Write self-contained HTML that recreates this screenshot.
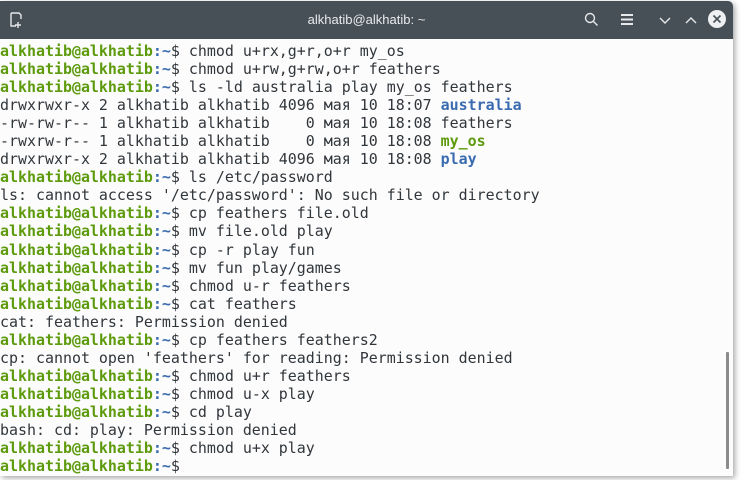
<!DOCTYPE html>
<html><head><meta charset="utf-8"><style>
html,body{margin:0;padding:0;width:745px;height:480px;overflow:hidden;background:#fff;}
.win{position:absolute;left:0;top:1px;width:733px;height:475px;background:#fcfcfc;border-top-right-radius:5px;box-shadow:2px 2px 6px rgba(0,0,0,.35);overflow:hidden}
.tb{position:absolute;left:0;top:0;width:733px;height:38px;background:#475057;}
.title{position:absolute;left:0;right:0;top:11px;text-align:center;color:#e8eaeb;font:13px "Liberation Sans",sans-serif}
.term{position:absolute;left:0;top:41px;font-family:"DejaVu Sans Mono","Liberation Mono",monospace;font-size:14.95px;line-height:18.05px;color:#31363b;white-space:pre}
.g{color:#5d9a0c;font-weight:bold}.b{color:#3a6bb0;font-weight:bold}
.sb{position:absolute;left:726px;top:351px;width:3px;height:117px;background:#8a8c8c;border-radius:1px}
</style></head><body>
<div class="win">
<div class="tb">
<svg width="733" height="38" style="position:absolute;left:0;top:0" fill="none" stroke="#e6e8ea" stroke-width="1.4">
<path d="M11 12h8l2 2v4M11 12v13h5M18 21v6M15 24h6"/>
<circle cx="590" cy="17" r="4.5"/><path d="M593.5 20.5l4 4"/>
<path d="M621 14h12M621 18.5h12M621 23h12" stroke-width="2"/>
<path d="M660 17l5 5 5-5M686 22l5-5 5 5"/>
<circle cx="717" cy="18" r="9" fill="#eef0f1" stroke="none"/>
<path d="M713.5 14.5l7 7M720.5 14.5l-7 7" stroke="#475057" stroke-width="1.6"/>
</svg>
<div class="title">alkhatib@alkhatib: ~</div>
</div>
<div class="term"><span class="g">alkhatib@alkhatib</span><span class="b">:~</span>$ chmod u+rx,g+r,o+r my_os
<span class="g">alkhatib@alkhatib</span><span class="b">:~</span>$ chmod u+rw,g+rw,o+r feathers
<span class="g">alkhatib@alkhatib</span><span class="b">:~</span>$ ls -ld australia play my_os feathers
drwxrwxr-x 2 alkhatib alkhatib 4096 мая 10 18:07 <span class="b">australia</span>
-rw-rw-r-- 1 alkhatib alkhatib    0 мая 10 18:08 feathers
-rwxrw-r-- 1 alkhatib alkhatib    0 мая 10 18:08 <span class="g">my_os</span>
drwxrwxr-x 2 alkhatib alkhatib 4096 мая 10 18:08 <span class="b">play</span>
<span class="g">alkhatib@alkhatib</span><span class="b">:~</span>$ ls /etc/password
ls: cannot access '/etc/password': No such file or directory
<span class="g">alkhatib@alkhatib</span><span class="b">:~</span>$ cp feathers file.old
<span class="g">alkhatib@alkhatib</span><span class="b">:~</span>$ mv file.old play
<span class="g">alkhatib@alkhatib</span><span class="b">:~</span>$ cp -r play fun
<span class="g">alkhatib@alkhatib</span><span class="b">:~</span>$ mv fun play/games
<span class="g">alkhatib@alkhatib</span><span class="b">:~</span>$ chmod u-r feathers
<span class="g">alkhatib@alkhatib</span><span class="b">:~</span>$ cat feathers
cat: feathers: Permission denied
<span class="g">alkhatib@alkhatib</span><span class="b">:~</span>$ cp feathers feathers2
cp: cannot open 'feathers' for reading: Permission denied
<span class="g">alkhatib@alkhatib</span><span class="b">:~</span>$ chmod u+r feathers
<span class="g">alkhatib@alkhatib</span><span class="b">:~</span>$ chmod u-x play
<span class="g">alkhatib@alkhatib</span><span class="b">:~</span>$ cd play
bash: cd: play: Permission denied
<span class="g">alkhatib@alkhatib</span><span class="b">:~</span>$ chmod u+x play
<span class="g">alkhatib@alkhatib</span><span class="b">:~</span>$ </div>
<div class="sb"></div>
</div>
</body></html>
